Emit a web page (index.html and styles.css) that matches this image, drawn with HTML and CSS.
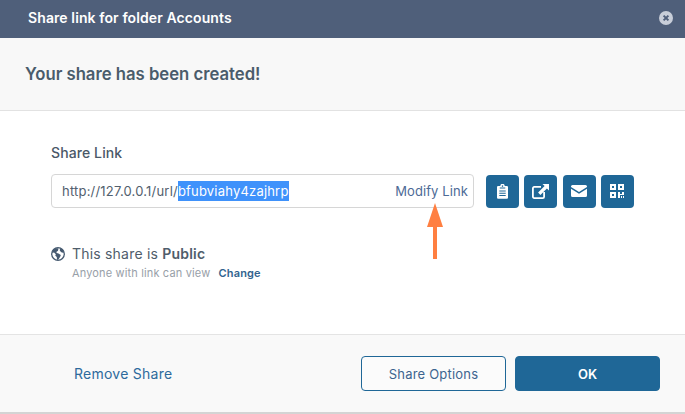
FILE: index.html
```html
<!DOCTYPE html>
<html lang="en">
<head>
<meta charset="utf-8">
<title>Share link</title>
<link rel="stylesheet" href="styles.css">
</head>
<body>
<div class="dialog">
  <header class="title-bar">
    <h1 class="title">Share link for folder Accounts</h1>
    <svg class="close" viewBox="0 0 14 14" width="14" height="14" aria-label="Close"><circle cx="7" cy="7" r="7" fill="#c8ced9"/><path d="M4.600 4.600l4.800 4.800M9.400 4.600l-4.800 4.800" stroke="#4f5f7a" stroke-width="2"/></svg>
  </header>
  <section class="banner"><h2 class="banner-text">Your share has been created!</h2></section>
  <main class="content">
    <div class="field-label">Share Link</div>
    <div class="link-row">
      <div class="link-box">
        <span class="url">http://127.0.0.1/url/<span class="selected">bfubviahy4zajhrp</span></span>
        <span class="modify">Modify Link</span>
        <svg class="arrow" viewBox="0 0 16 56" width="16" height="56"><path d="M8 0L16 24H10V56H6V24H0Z" fill="#ff7f41"/></svg>
      </div>
      <div class="actions">
        <button class="icon-btn" aria-label="Copy"><svg viewBox="0 0 12 16" width="11" height="15"><path fill="#fff" fill-rule="evenodd" d="M1.200 2H3.600A2.400 2.400 0 0 1 8.400 2H10.800A1.200 1.200 0 0 1 12 3.200V14.800A1.200 1.200 0 0 1 10.800 16H1.200A1.200 1.200 0 0 1 0 14.800V3.200A1.200 1.200 0 0 1 1.200 2ZM6 1.200A.9.9 0 1 0 6 3 .9.9 0 1 0 6 1.200ZM3 3.500V4.800H9V3.500ZM2.500 6.800V8H9.500V6.800ZM2.500 9.300V10.500H9.500V9.300ZM2.500 11.800V13H9.500V11.800Z"/></svg></button>
        <button class="icon-btn" aria-label="Open"><svg viewBox="0 0 17 15" width="17" height="15"><path fill="none" stroke="#fff" stroke-width="1.800" d="M9 2.900H2.200A1.300 1.300 0 0 0 .9 4.200V12.800A1.300 1.300 0 0 0 2.200 14.100H10.800A1.300 1.300 0 0 0 12.100 12.800V8"/><path fill="#fff" d="M10.500 0H17V6.500L14.900 4.400 8.400 10.900 6.100 8.600 12.600 2.100Z"/></svg></button>
        <button class="icon-btn" aria-label="Email"><svg viewBox="0 0 16 12" width="16" height="12"><path fill="#fff" d="M1.500 0H14.500A1.500 1.500 0 0 1 16 1.500V2L8 7 0 2V1.500A1.500 1.500 0 0 1 1.500 0Z"/><path fill="#fff" d="M0 3.800L8 8.800 16 3.800V10.500A1.500 1.500 0 0 1 14.500 12H1.500A1.500 1.500 0 0 1 0 10.500Z"/></svg></button>
        <button class="icon-btn" aria-label="QR code"><svg viewBox="0 0 14 14" width="14" height="14"><path fill="#fff" fill-rule="evenodd" d="M0 0H6V6H0ZM2 2V4H4V2ZM8 0H14V6H8ZM10 2V4H12V2ZM0 8H6V14H0ZM2 10V12H4V10ZM8 8H10V10H12V8H14V11H10V14H8ZM11 12H12V14H11ZM13 12H14V14H13Z"/></svg></button>
      </div>
    </div>
    <div class="visibility">
      <svg class="globe" viewBox="0 0 14 14" width="14" height="14"><circle cx="7" cy="7" r="6.300" fill="none" stroke="#465a70" stroke-width="1.300"/><path fill="#465a70" d="M4.500 1.200L2 3 1 6 3 5.500 4.800 7.200 4.300 8.800 5.800 10 6 13 7.500 12.500 9.300 9.500 9.800 8 7.500 6.500 5.800 6 5.300 5 7 3.800 7.500 1.200ZM9 1.500L8.800 3.800 10.300 5.200 12.800 6 12.300 3.500 10.500 1.800Z"/></svg>
      <div>
        <div class="vis-title">This share is <strong>Public</strong></div>
        <div class="vis-sub">Anyone with link can view <a class="change">Change</a></div>
      </div>
    </div>
  </main>
  <footer class="footer">
    <a class="remove">Remove Share</a>
    <div class="footer-actions">
      <button class="btn btn-outline">Share Options</button>
      <button class="btn btn-primary">OK</button>
    </div>
  </footer>
</div>
</body>
</html>
```
FILE: styles.css
```css
* { box-sizing: border-box; }
html, body { margin: 0; height: 100%; }
body { background: #fff; font-family: Inter, "Liberation Sans", sans-serif; color: #4a5868; overflow: hidden; }
.dialog { width: 685px; height: 414px; display: flex; flex-direction: column; border-bottom: 2px solid #d4d4d4; }
.title-bar { height: 38px; flex: none; background: #4f5f7a; display: flex; align-items: center; justify-content: space-between; padding: 0 12px 2px 28px; }
.title { margin: 0 0 1px; font-size: 14px; font-weight: 600; color: #fff; letter-spacing: .1px; }
.close { display: block; }
.banner { height: 73px; flex: none; background: #f8f8f8; border-bottom: 1px solid #e2e2e2; display: flex; align-items: center; padding: 0 0 1px 25px; }
.banner-text { margin: 0; font-size: 16.700px; font-weight: 600; color: #4a5c6b; }
.content { flex: 1; padding: 34px 0 0 51px; }
.field-label { font-size: 14px; font-weight: 500; line-height: 16px; color: #4a5868; letter-spacing: .1px; }
.link-row { display: flex; align-items: center; margin-top: 13px; gap: 12px; }
.link-box { position: relative; width: 423px; height: 34px; border: 1px solid #d6d6d6; border-radius: 4px; display: flex; align-items: center; justify-content: space-between; padding: 0 5px 0 10px; font-size: 13px; background: #fff; }
.url { color: #52606e; letter-spacing: .2px; }
.selected { background: #3f92fb; color: #fff; display: inline-block; line-height: 20px; }
.modify { color: #4d6a96; letter-spacing: .1px; }
.arrow { position: absolute; left: 375px; top: 28px; }
.actions { display: flex; gap: 5.300px; }
.icon-btn { width: 33px; height: 33px; padding: 0; border: 0; border-radius: 4px; background: #1f6797; display: flex; align-items: center; justify-content: center; }
.visibility { display: flex; gap: 7px; margin-top: 37px; }
.globe { display: block; margin-top: 2px; flex: none; }
.vis-title { font-size: 14px; line-height: 18px; color: #4f5d6b; letter-spacing: .2px; }
.vis-title strong { font-weight: 600; }
.vis-sub { font-size: 11px; line-height: 14px; margin-top: 3px; color: #98a0a8; letter-spacing: .15px; }
.change { margin-left: 5px; font-weight: 600; color: #31638e; }
.footer { height: 78px; flex: none; background: #f9f9f9; border-top: 1px solid #e4e4e4; display: flex; align-items: center; justify-content: space-between; padding: 0 25px 0 74px; }
.remove { font-size: 14px; color: #2d6a9c; letter-spacing: .25px; }
.footer-actions { display: flex; gap: 9px; }
.btn { height: 35px; border-radius: 4px; font-family: inherit; font-size: 13px; padding: 0; }
.btn-outline { width: 145px; background: #fbfbfb; border: 1px solid #1f6797; color: #3d648f; font-weight: 400; letter-spacing: .2px; }
.btn-primary { width: 145px; background: #1f6797; border: 1px solid #1f6797; color: #fff; font-weight: 600; }
```
